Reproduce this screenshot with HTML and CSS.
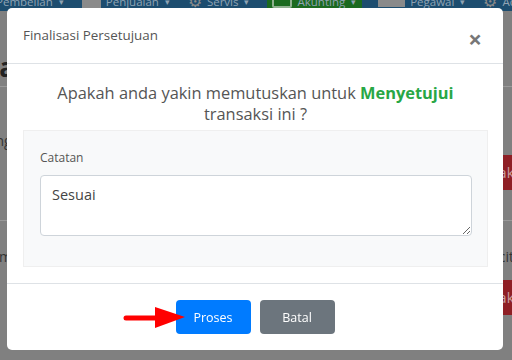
FILE: index.html
```html
<!DOCTYPE html>
<html lang="id">
<head>
  <meta charset="UTF-8" />
  <title>Finalisasi Persetujuan</title>
  <link rel="stylesheet" href="styles.css">
</head>
<body>
  <nav class="navbar">
    <span class="nav-item first">Pembelian <span class="caret">▾</span></span>
    <span class="nav-item"><span class="nav-icon box"></span>Penjualan <span class="caret">▾</span></span>
    <span class="nav-item"><span class="nav-icon gear">⚙</span>Servis <span class="caret">▾</span></span>
    <span class="nav-item active"><span class="nav-icon box"></span>Akunting <span class="caret">▾</span></span>
    <span class="nav-item"><span class="nav-icon truck"></span>Pegawai <span class="caret">▾</span></span>
    <span class="nav-item"><span class="nav-icon gear">⚙</span>Admin</span>
  </nav>

  <main class="page">
    <h3 class="page-title">Data</h3>
    <div class="page-row first">
      <span class="cell">Tanggal</span>
      <span class="btn-red">Tolak</span>
    </div>
    <div class="page-row second">
      <span class="cell">Nominal</span>
      <div class="cell-stack">
        <span class="cell">Rincit</span>
        <span class="btn-red">Tolak</span>
      </div>
    </div>
  </main>

  <div class="modal">
    <div class="modal-header">
      <h5 class="modal-title">Finalisasi Persetujuan</h5>
      <span class="close">&times;</span>
    </div>
    <div class="modal-body">
      <p class="question">Apakah anda yakin memutuskan untuk <b class="approve">Menyetujui</b><br>transaksi ini ?</p>
      <div class="note-card">
        <label class="note-label" for="catatan">Catatan</label>
        <textarea id="catatan" class="note-input">Sesuai</textarea>
      </div>
    </div>
    <div class="modal-footer">
      <svg class="pointer" width="64" height="24" viewBox="0 0 64 24">
        <line x1="3" y1="12" x2="34" y2="12" stroke="#f00" stroke-width="5" stroke-linecap="round"/>
        <polygon points="32,1 62,11 32,22" fill="#f00"/>
      </svg>
      <button class="btn btn-primary">Proses</button>
      <button class="btn btn-secondary">Batal</button>
    </div>
  </div>
</body>
</html>
```

FILE: styles.css
```css
body {
  margin: 0;
  font-family: 'Open Sans', 'Noto Sans', sans-serif;
  background-color: #808080;
  color: #333;
  height: 360px;
  overflow: hidden;
}

.navbar {
  display: flex;
  height: 11px;
  overflow: hidden;
  background-color: #1d4d6f;
  color: #8fa3b3;
  font-size: 11.5px;
}

.nav-item {
  display: flex;
  align-items: center;
  height: 20px;
  margin-top: -9px;
  padding-right: 18px;
  white-space: nowrap;
}

.nav-item.first {
  margin-left: -4px;
}

.nav-item.active {
  background-color: #1b6a1f;
  padding: 0 6px 0 5px;
  margin-right: 16px;
}

.caret {
  margin-left: 6px;
  font-size: 9px;
}

.nav-icon {
  display: inline-block;
  margin-right: 5px;
  color: #8a8a8a;
  font-size: 16px;
}

.nav-icon.box {
  width: 19px;
  height: 14px;
  background-color: #8a8a8a;
}

.nav-item.active .nav-icon.box {
  box-sizing: border-box;
  width: 20px;
  background-color: #1b6a1f;
  border: 2px solid #8fb08f;
  border-radius: 2px;
}

.nav-icon.truck {
  width: 27px;
  height: 12px;
  background-color: #8a8a8a;
}

.page {
  margin-left: -20px;
  width: 540px;
}

.page-title {
  margin: 38px 0 0;
  height: 37px;
  font-size: 26px;
  color: #222;
}

.page-row {
  display: flex;
  justify-content: space-between;
  align-items: flex-start;
  border-top: 1px solid #999;
  font-size: 14px;
  color: #333;
}

.page-row.first {
  height: 133px;
}

.page-row.first .cell {
  margin-top: 44px;
}

.page-row.first .btn-red {
  margin-top: 68px;
}

.page-row.second .cell {
  margin-top: 26px;
}

.cell-stack {
  display: flex;
  flex-direction: column;
  align-items: flex-end;
}

.cell-stack .cell {
  margin-right: 6px;
}

.btn-red {
  margin-top: 14px;
  background-color: #8f1f25;
  color: #c8a0a0;
  padding: 8px 6px;
  font-size: 14px;
}

.modal {
  position: fixed;
  left: 7px;
  top: 8px;
  width: 496px;
  height: 342px;
  background-color: #fff;
  border-radius: 5px;
  display: flex;
  flex-direction: column;
}

.modal-header {
  display: flex;
  justify-content: space-between;
  align-items: center;
  height: 55px;
  padding: 0 21px 0 16px;
  border-bottom: 1px solid #dee2e6;
}

.modal-title {
  margin: 0 0 2px;
  font-size: 13.4px;
  font-weight: 400;
  color: #555;
}

.close {
  font-size: 24px;
  font-weight: 700;
  color: #777;
  line-height: 1;
  margin-top: 6px;
}

.modal-body {
  padding: 18px 15px 16px 16px;
  border-bottom: 1px solid #dee2e6;
}

.question {
  margin: 0 0 6px;
  text-align: center;
  font-size: 16.4px;
  line-height: 21px;
  color: #555;
}

.approve {
  color: #28a745;
}

.note-card {
  display: flex;
  flex-direction: column;
  padding: 18px 15px 30px 16px;
  background-color: #f8f9fa;
  border: 1px solid #efefef;
}

.note-label {
  font-size: 12px;
  color: #555;
  margin-bottom: 9px;
}

.note-input {
  height: 61px;
  box-sizing: border-box;
  padding: 9px 11px;
  border: 1px solid #ced4da;
  border-radius: 4px;
  font-family: inherit;
  font-size: 14.5px;
  color: #444;
  resize: vertical;
}

.modal-footer {
  position: relative;
  display: flex;
  justify-content: center;
  gap: 9px;
  padding: 16px 0 0;
}

.btn {
  width: 75px;
  height: 34px;
  border: none;
  border-radius: 4px;
  font-family: inherit;
  font-size: 12.5px;
  color: #fff;
}

.btn-primary {
  background-color: #007bff;
}

.btn-secondary {
  background-color: #6c757d;
}

.pointer {
  position: absolute;
  left: 116px;
  top: 22px;
}
```
